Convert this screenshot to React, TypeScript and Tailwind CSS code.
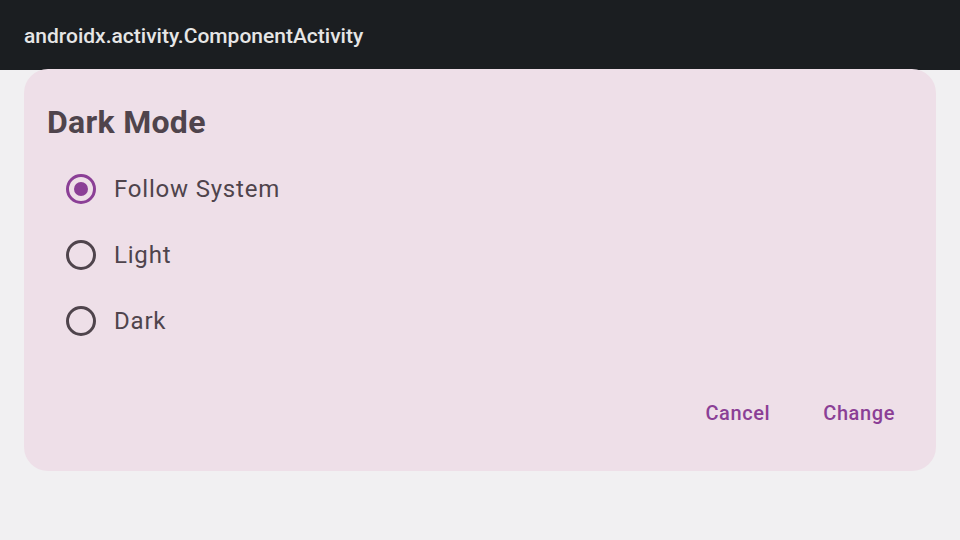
import React from "react";

function Radio({ checked }: { checked: boolean }) {
  return (
    <svg width="32" height="32" viewBox="0 0 32 32" className="shrink-0">
      <circle cx="16" cy="16" r="13.5" fill="none" stroke={checked ? "#8b3f96" : "#4f444c"} strokeWidth="3" />
      {checked && <circle cx="16" cy="16" r="7" fill="#8b3f96" />}
    </svg>
  );
}

export default function App() {
  const items = [
    { label: "Follow System", checked: true },
    { label: "Light", checked: false },
    { label: "Dark", checked: false },
  ];
  return (
    <div className="w-[960px] h-[540px] bg-[#f1f0f2] flex flex-col overflow-hidden" style={{ fontFamily: "Roboto, 'Noto Sans', sans-serif" }}>
      <div className="h-[70px] shrink-0 bg-[#1b1e21] flex items-center px-6 pt-1">
        <span className="text-[21px] text-[#e6e6e6] font-medium">androidx.activity.ComponentActivity</span>
      </div>
      <div className="mx-6 -mt-px h-[402px] bg-[#eedfe8] rounded-[24px] flex flex-col pl-[23px] pr-[41px] pt-[32px]">
        <div className="text-[32px] font-bold text-[#4f444c] leading-[42px] tracking-[0.3px]">Dark Mode</div>
        <div className="flex flex-col mt-[13px] pl-[18px]">
          {items.map((it) => (
            <div key={it.label} className="h-[66px] flex items-center gap-[17px]">
              <Radio checked={it.checked} />
              <span className="text-[24px] text-[#4f444c] tracking-[0.8px]">{it.label}</span>
            </div>
          ))}
        </div>
        <div className="flex justify-end gap-[53px] mt-[44px]">
          <span className="text-[20px] font-medium text-[#8b3f96] tracking-[0.6px]">Cancel</span>
          <span className="text-[20px] font-medium text-[#8b3f96] tracking-[0.6px]">Change</span>
        </div>
      </div>
    </div>
  );
}
